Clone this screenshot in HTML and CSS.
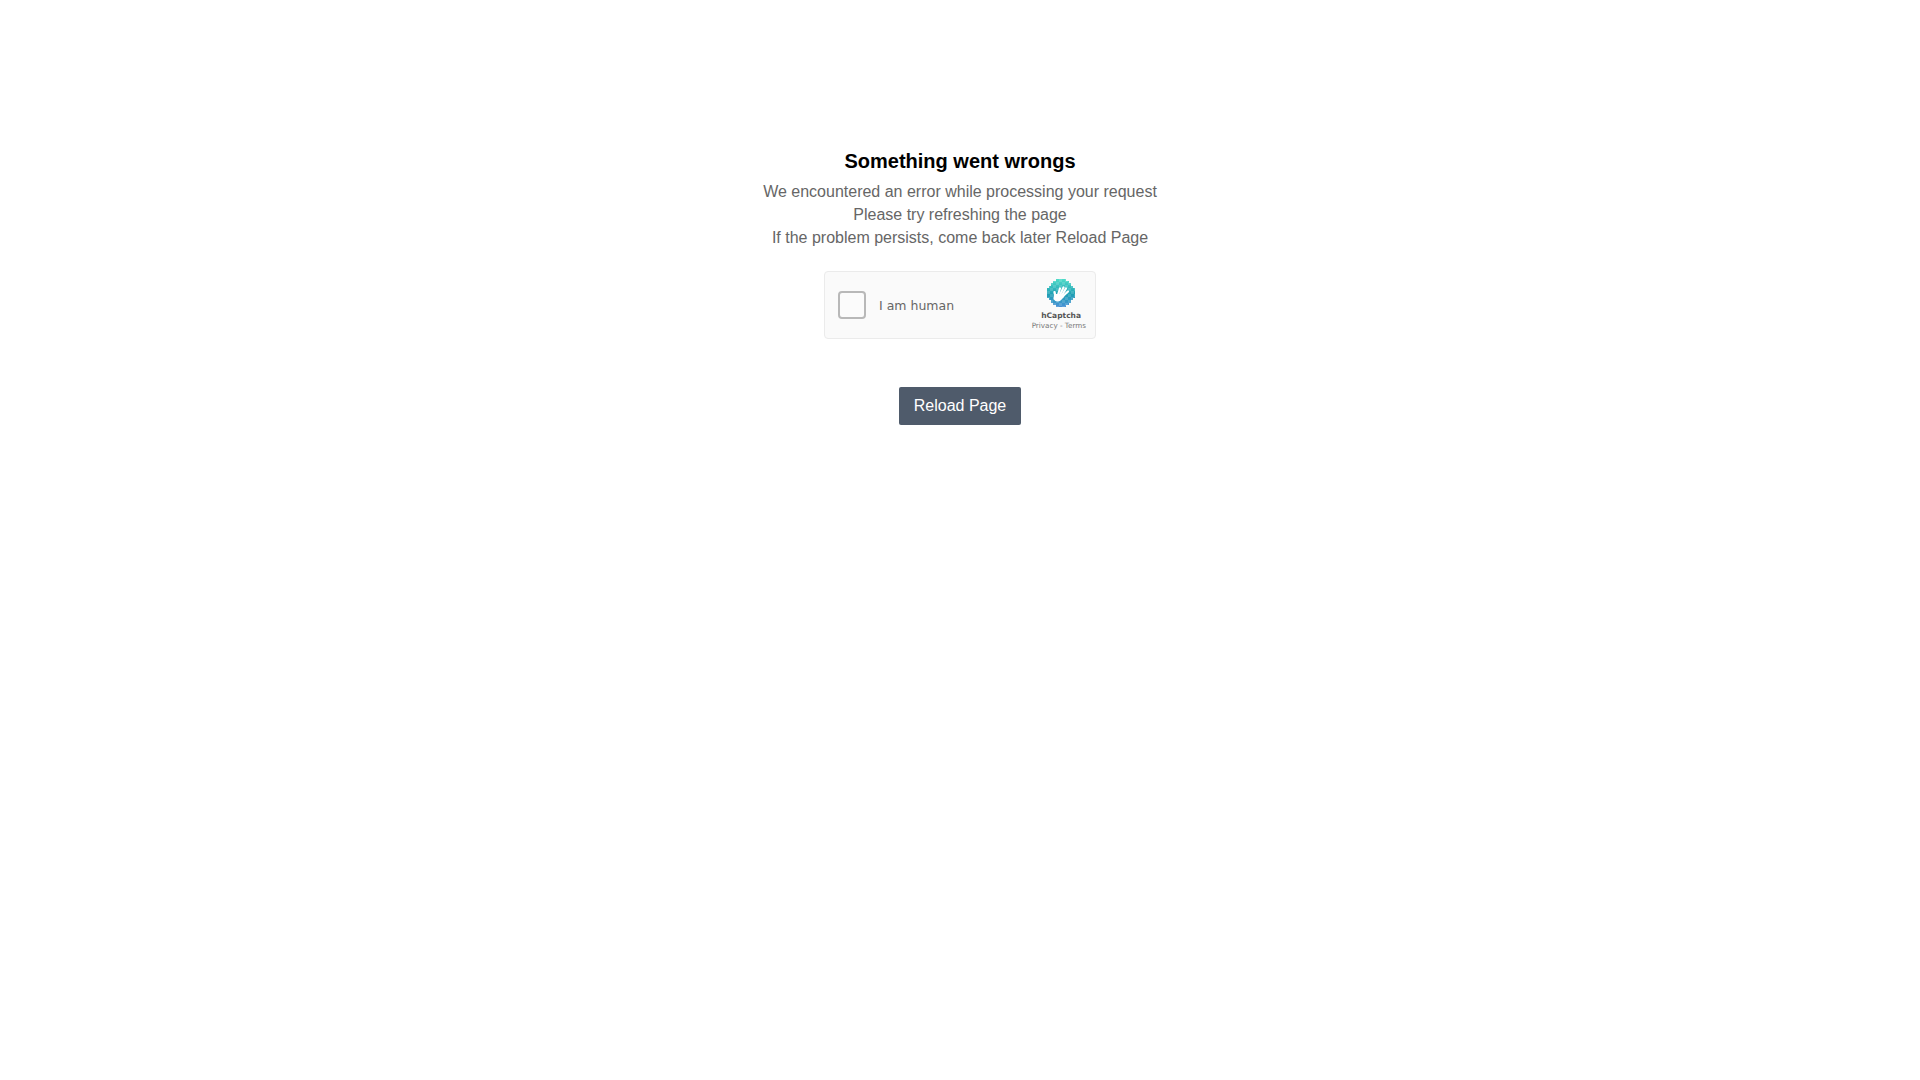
FILE: index.html
```html
<!DOCTYPE html>
<html>
<head>
    <title>Something went wrongs</title>
    <link rel="stylesheet" href="styles.css">
</head>
<body>
    <div class="error-page">
        <h1>Something went wrongs</h1>
        <p>We encountered an error while processing your request</p>
        <p>Please try refreshing the page</p>
        <p>If the problem persists, come back later Reload Page</p>

        <div class="captcha">
            <div class="checkbox"></div>
            <div class="label">I am human</div>
            <div class="brand">
                <svg class="logo" viewBox="0 0 28 28" width="28" height="28">
                    <defs>
                        <linearGradient id="g" x1="0" y1="0" x2="0" y2="1">
                            <stop offset="0" stop-color="#4fdcc8"/>
                            <stop offset="0.55" stop-color="#1f9fb4"/>
                            <stop offset="1" stop-color="#4a92d6"/>
                        </linearGradient>
                        <pattern id="cells" width="6" height="6" patternUnits="userSpaceOnUse">
                            <rect x="0" y="0" width="3" height="3" fill="#fff" fill-opacity="0.14"/>
                            <rect x="3" y="3" width="3" height="3" fill="#fff" fill-opacity="0.14"/>
                        </pattern>
                    </defs>
                    <path fill="url(#g)" d="M9 0h10v2h3v2h2v3h2v2h2v10h-2v2h-2v3h-2v2h-3v2h-10v-2h-3v-2h-2v-3h-2v-2h-2v-10h2v-2h2v-3h2v-2h3z"/>
                    <path fill="url(#cells)" d="M9 0h10v2h3v2h2v3h2v2h2v10h-2v2h-2v3h-2v2h-3v2h-10v-2h-3v-2h-2v-3h-2v-2h-2v-10h2v-2h2v-3h2v-2h3z"/>
                    <g stroke="#fff" stroke-width="2.200" stroke-linecap="round" fill="none">
                        <path d="M11 16L13 9.500"/>
                        <path d="M13 16L16.500 8.500"/>
                        <path d="M14.500 17L19 9.500"/>
                        <path d="M15 18L21 12.500"/>
                        <path d="M8.500 18L7.500 13"/>
                    </g>
                    <path fill="#fff" d="M7 15L16 15L17 18L13 22C10.500 23 8 22.500 6.500 20z"/>
                </svg>
                <div class="name">hCaptcha</div>
                <div class="links">Privacy - Terms</div>
            </div>
        </div>

        <button class="reload">Reload Page</button>
    </div>
</body>
</html>
```

FILE: styles.css
```css
body { margin: 0; background-color: #fff; font-family: "Liberation Sans", Arial, sans-serif; }
.error-page { display: flex; flex-direction: column; align-items: center; padding-top: 147px; }
h1 { margin: 0 0 5px; font-size: 20px; line-height: 28px; font-weight: bold; color: #000; }
p { margin: 0; font-size: 16px; line-height: 23px; color: #666; }
.captcha { display: flex; align-items: center; box-sizing: border-box; width: 272px; height: 68px; margin-top: 22px; padding: 0 9px 0 13px; background-color: #fafafa; border: 1px solid #ebebeb; border-radius: 4px; font-family: "DejaVu Sans", sans-serif; }
.checkbox { box-sizing: border-box; width: 28px; height: 28px; background-color: #fbfbfb; border: 2px solid #b8b8b8; border-radius: 4px; }
.label { margin-left: 13px; font-size: 12.500px; color: #666; }
.brand { display: flex; flex-direction: column; align-items: flex-end; margin-left: auto; }
.logo { display: block; margin-right: 11px; }
.name { margin: 3px 5px 0 0; font-size: 7.500px; line-height: 11px; font-weight: bold; color: #555; }
.links { margin-top: 0; font-size: 7.200px; line-height: 10px; color: #777; }
.reload { display: block; margin-top: 48px; width: 122px; height: 38px; padding: 0; background-color: #4f5b6b; border: none; border-radius: 2px; color: #fff; font-family: inherit; font-size: 16px; }
```
